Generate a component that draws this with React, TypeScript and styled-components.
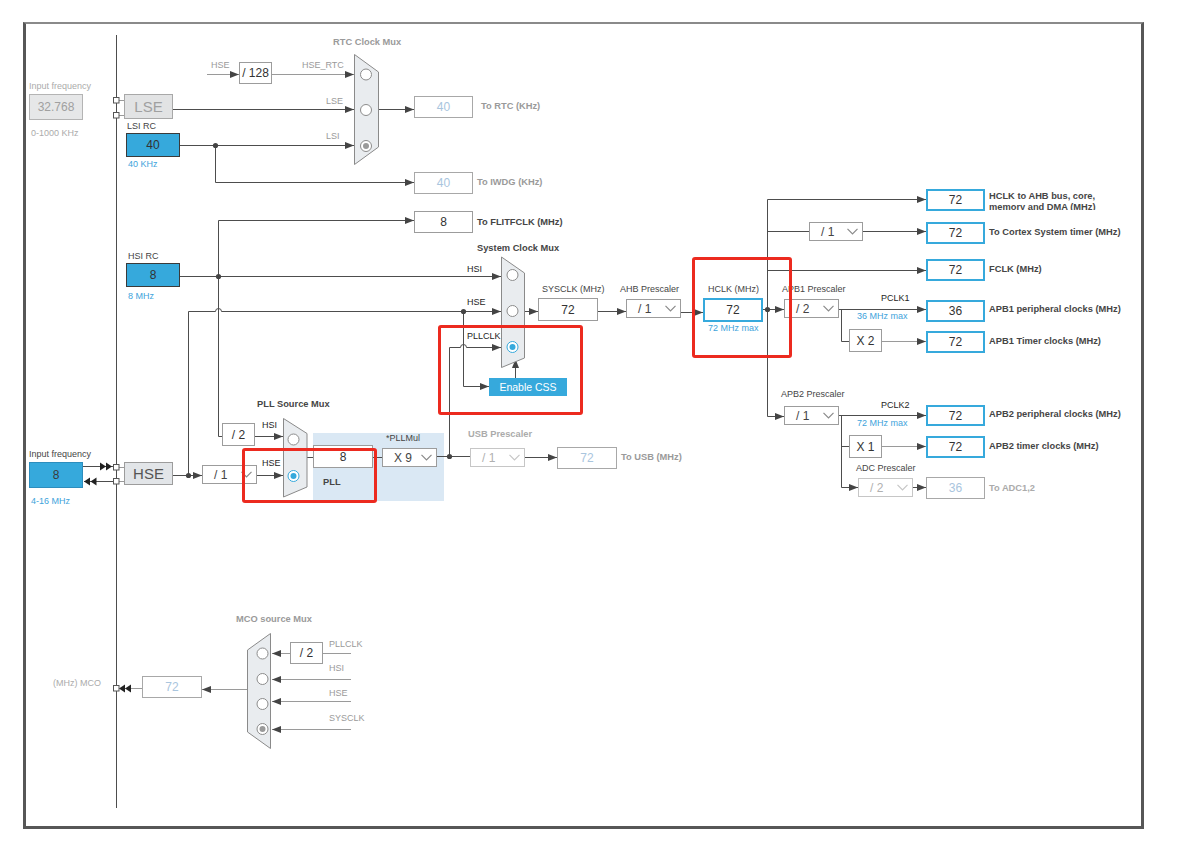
import React from "react";
import styled, { createGlobalStyle, css } from "styled-components";

const GlobalStyle = createGlobalStyle`
  html, body { margin: 0; padding: 0; background: #fff; }
  body { font-family: "Liberation Sans", Arial, sans-serif; }
`;

const DARK = "#4d4d4d";
const LIGHT = "#9a9a9a";
const BLUE = "#36a9dc";

type Pos = { $x: number; $y: number; $w?: number; $h?: number };

const Node = styled.div.attrs<Pos>((p) => ({
  style: { left: p.$x, top: p.$y, width: p.$w, height: p.$h },
}))<Pos>`
  position: absolute;
  box-sizing: border-box;
`;

const Canvas = styled.div`
  position: relative;
  width: 1191px;
  height: 847px;
  box-sizing: border-box;
  padding: 22px 0 0 23px;
  overflow: hidden;
`;

const Frame = styled.div`
  width: 1121px;
  height: 807px;
  box-sizing: border-box;
  border: 3px solid #575757;
  border-top: 2px solid #8a8a8a;
`;

type Tone = "plain" | "out" | "off" | "fill" | "src" | "srcOff" | "input" | "inputBlue";

const toneCss: Record<Tone, ReturnType<typeof css>> = {
  plain: css`background: #fff; border: 1px solid #9c9c9c; color: #333;`,
  out: css`background: #fff; border: 2px solid ${BLUE}; color: #333;`,
  off: css`background: #fff; border: 1px solid #a8a8a8; color: #a9c5de;`,
  fill: css`background: ${BLUE}; border: 1px solid #3a3a3a; color: #333;`,
  src: css`background: #e2e5e8; border: 1px solid #9c9c9c; color: #555; font-size: 15px;`,
  srcOff: css`background: #e2e3e4; border: 1px solid #a8a8a8; color: #a0a0a0; font-size: 15px;`,
  input: css`background: #e6e7e8; border: 1px solid #b4b4b4; color: #a0a0a0;`,
  inputBlue: css`background: ${BLUE}; border: 1px solid #2d8dbd; color: #3b3b3b;`,
};

const ValueBox = styled(Node)<{ $tone: Tone }>`
  display: flex;
  align-items: center;
  justify-content: center;
  font-size: 12px;
  ${(p) => toneCss[p.$tone]}
`;

const SelectBox = styled(Node)<{ $off?: boolean }>`
  display: flex;
  align-items: center;
  justify-content: space-between;
  padding: 0 4px 0 11px;
  background: #fff;
  border: 1px solid ${(p) => (p.$off ? "#c6c6c6" : "#9c9c9c")};
  color: ${(p) => (p.$off ? "#b0b0b0" : "#444")};
  font-size: 12px;
  svg { stroke: ${(p) => (p.$off ? "#c6c6c6" : "#8a8a8a")}; }
`;

type LabelTone = "dark" | "black" | "muted" | "blue" | "faint";
const labelColor: Record<LabelTone, string> = {
  dark: "#454545",
  black: "#1e1e1e",
  muted: "#9a9a9a",
  faint: "#ababab",
  blue: "#3ea3db",
};

const Label = styled(Node)<{ $tone?: LabelTone; $bold?: boolean }>`
  white-space: nowrap;
  font-size: ${(p) => (p.$bold ? "9.3px" : "9px")};
  line-height: 12px;
  font-weight: ${(p) => (p.$bold ? 700 : 400)};
  color: ${(p) => labelColor[p.$tone ?? "dark"]};
`;

const ClipLabel = styled(Label)`
  white-space: normal;
  overflow: hidden;
  line-height: 11px;
`;

const CssButton = styled(Node)`
  display: flex;
  align-items: center;
  justify-content: center;
  background: ${BLUE};
  color: #fff;
  font-size: 10.5px;
`;

const PllArea = styled(Node)`
  background: #dae8f4;
`;

const Highlight = styled(Node)`
  border: 3px solid #ec2a1f;
  border-radius: 3px;
`;

const Wires = styled.svg`
  position: absolute;
  left: 0;
  top: 0;
  pointer-events: none;
`;

const Chevron = () => (
  <svg width="11" height="7" viewBox="0 0 11 7" fill="none" strokeWidth="1.2">
    <polyline points="0.5,0.8 5.5,5.8 10.5,0.8" />
  </svg>
);

type Wire = { d: string; light?: boolean; arrow?: boolean };

const wires: Wire[] = [
  { d: "M116.5,35 V808" },
  { d: "M207,74.5 H239", light: true, arrow: true },
  { d: "M272,74.5 H354", light: true, arrow: true },
  { d: "M173,109.5 H354", arrow: true },
  { d: "M180,145.5 H354", arrow: true },
  { d: "M215.5,145.5 V182.5 H414", arrow: true },
  { d: "M378,109.5 H414", arrow: true },
  { d: "M222,436.5 H218.5 V220.5 H414", arrow: true },
  { d: "M180,276.5 H501", arrow: true },
  { d: "M188.5,475.5 V311.5 H215.5 A3,3 0 0 1 221.5,311.5 H501", arrow: true },
  { d: "M463.5,311.5 V386.5 H489", arrow: true },
  { d: "M515.5,378 V359", arrow: true },
  { d: "M449.5,456.5 V347.5 H460.5 A3,3 0 0 1 466.5,347.5 H501", arrow: true },
  { d: "M524,311.5 H538", arrow: true },
  { d: "M598,311.5 H626", arrow: true },
  { d: "M681,312.5 H703", arrow: true },
  { d: "M763,309.5 H784", arrow: true },
  { d: "M767.5,199.5 V416.5 H784", arrow: true },
  { d: "M767.5,199.5 H926", arrow: true },
  { d: "M767.5,231.5 H809" },
  { d: "M863,231.5 H926", arrow: true },
  { d: "M767.5,270.5 H926", arrow: true },
  { d: "M839,309.5 H926", arrow: true },
  { d: "M841.5,309.5 V341.5 H849" },
  { d: "M882,341.5 H926", light: true, arrow: true },
  { d: "M839,415.5 H926", arrow: true },
  { d: "M841.5,415.5 V487.5 H858", arrow: true },
  { d: "M841.5,446.5 H849" },
  { d: "M882,446.5 H926", light: true, arrow: true },
  { d: "M913,487.5 H926", arrow: true },
  { d: "M83,466.5 H113" },
  { d: "M84,481.5 H113" },
  { d: "M119,100.5 H124", light: true },
  { d: "M119,115.5 H124", light: true },
  { d: "M119,467.5 H124", light: true },
  { d: "M119,481.5 H124", light: true },
  { d: "M173,475.5 H202", arrow: true },
  { d: "M257,475.5 H283", arrow: true },
  { d: "M255,436.5 H283", arrow: true },
  { d: "M307,457.5 H313" },
  { d: "M373,457.5 H382" },
  { d: "M437,456.5 H470" },
  { d: "M525,457.5 H557", arrow: true },
  { d: "M351,653.5 H323", light: true },
  { d: "M290,653.5 H272", light: true, arrow: true },
  { d: "M351,679.5 H272", light: true, arrow: true },
  { d: "M351,701.5 H272", light: true, arrow: true },
  { d: "M351,729.5 H272", light: true, arrow: true },
  { d: "M247,689.5 H202", light: true, arrow: true },
  { d: "M142,688.5 H119", light: true },
];

const heads: string[] = [
  "M100,462.5 L106,466.5 L100,470.5 Z",
  "M106,462.5 L112,466.5 L106,470.5 Z",
  "M90,477.5 L84,481.5 L90,485.5 Z",
  "M96.5,477.5 L90.5,481.5 L96.5,485.5 Z",
  "M125,684.5 L119,688.5 L125,692.5 Z",
  "M131,684.5 L125,688.5 L131,692.5 Z",
];

const dots: [number, number][] = [
  [215.5, 145.5],
  [218.5, 276.5],
  [463.5, 311.5],
  [188.5, 475.5],
  [449.5, 456.5],
  [767.5, 309.5],
];

const ports: [number, number][] = [
  [113.5, 97.5],
  [113.5, 112.5],
  [113.5, 464.5],
  [113.5, 478.5],
  [113.5, 685.5],
];

type Mux = {
  points: string;
  cx: number;
  cys: number[];
  selected: number;
  blue?: boolean;
};

const muxes: Mux[] = [
  { points: "354.5,54.5 378.5,72 378.5,147 354.5,164.5", cx: 366, cys: [74.5, 110, 146], selected: 2 },
  { points: "501.5,257 524.5,273 524.5,358 501.5,367.5", cx: 512.5, cys: [275, 311, 347], selected: 2, blue: true },
  { points: "283.5,418.5 307,433.5 307,487 283.5,497", cx: 293.5, cys: [439.5, 476], selected: 1, blue: true },
  { points: "270.5,633.5 270.5,748.5 247.5,732 247.5,650", cx: 262.5, cys: [653.5, 679, 704, 729], selected: 3 },
];

const MuxDrawing = ({ m }: { m: Mux }) => (
  <g>
    <polygon points={m.points} fill="#e9ecef" stroke="#8a8a8a" strokeWidth="1" />
    {m.cys.map((cy, i) => {
      const on = i === m.selected;
      const ring = on && m.blue ? BLUE : "#8c8c8c";
      return (
        <g key={i}>
          <circle cx={m.cx} cy={cy} r={5.5} fill="#fff" stroke={ring} strokeWidth="1" />
          {on && <circle cx={m.cx} cy={cy} r={3} fill={m.blue ? BLUE : "#9a9a9a"} />}
        </g>
      );
    })}
  </g>
);

type Box = [number, number, number, number, string, Tone];
const boxes: Box[] = [
  [29, 94, 54, 26, "32.768", "input"],
  [124, 94, 49, 25, "LSE", "srcOff"],
  [126, 133, 54, 24, "40", "fill"],
  [239, 62, 33, 22, "/ 128", "plain"],
  [414, 96, 59, 22, "40", "off"],
  [414, 172, 59, 22, "40", "off"],
  [414, 211, 59, 22, "8", "plain"],
  [126, 263, 54, 24, "8", "fill"],
  [538, 298, 60, 23, "72", "plain"],
  [703, 298, 60, 24, "72", "out"],
  [926, 189, 59, 22, "72", "out"],
  [926, 222, 59, 22, "72", "out"],
  [926, 259, 59, 22, "72", "out"],
  [926, 300, 59, 22, "36", "out"],
  [926, 331, 59, 22, "72", "out"],
  [926, 405, 59, 21, "72", "out"],
  [926, 436, 59, 22, "72", "out"],
  [926, 477, 59, 22, "36", "off"],
  [849, 329, 33, 23, "X 2", "plain"],
  [849, 435, 33, 23, "X 1", "plain"],
  [29, 462, 54, 26, "8", "inputBlue"],
  [124, 462, 49, 23, "HSE", "src"],
  [222, 423, 33, 23, "/ 2", "plain"],
  [313, 445, 60, 23, "8", "plain"],
  [557, 447, 60, 22, "72", "off"],
  [290, 642, 33, 22, "/ 2", "plain"],
  [142, 676, 60, 22, "72", "off"],
];

type Sel = [number, number, number, string, boolean?];
const selects: Sel[] = [
  [626, 299, 55, "/ 1"],
  [784, 299, 55, "/ 2"],
  [809, 222, 54, "/ 1"],
  [784, 406, 55, "/ 1"],
  [858, 478, 55, "/ 2", true],
  [202, 465, 55, "/ 1"],
  [382, 448, 55, "X 9"],
  [470, 448, 55, "/ 1", true],
];

type Lbl = [number, number, string, LabelTone, boolean?];
const labels: Lbl[] = [
  [29, 86, "Input frequency", "faint"],
  [31, 133, "0-1000 KHz", "faint"],
  [333, 42, "RTC Clock Mux", "muted", true],
  [211, 65, "HSE", "muted"],
  [302, 65, "HSE_RTC", "muted"],
  [326, 101, "LSE", "muted"],
  [127, 126, "LSI RC", "dark"],
  [326, 136, "LSI", "muted"],
  [128, 164, "40 KHz", "blue"],
  [481, 106, "To RTC (KHz)", "muted", true],
  [477, 182, "To IWDG (KHz)", "muted", true],
  [477, 222, "To FLITFCLK (MHz)", "dark", true],
  [128, 256, "HSI RC", "dark"],
  [128, 296, "8 MHz", "blue"],
  [477, 248, "System Clock Mux", "dark", true],
  [467, 269, "HSI", "black"],
  [467, 302, "HSE", "black"],
  [467, 336, "PLLCLK", "black"],
  [542, 289, "SYSCLK (MHz)", "dark"],
  [620, 289, "AHB Prescaler", "dark"],
  [708, 289, "HCLK (MHz)", "dark"],
  [708, 328, "72 MHz max", "blue"],
  [782, 289, "APB1 Prescaler", "dark"],
  [989, 232, "To Cortex System timer (MHz)", "dark", true],
  [989, 269, "FCLK (MHz)", "dark", true],
  [881, 298, "PCLK1", "black"],
  [857, 316, "36 MHz max", "blue"],
  [989, 309, "APB1 peripheral clocks (MHz)", "dark", true],
  [989, 341, "APB1 Timer clocks (MHz)", "dark", true],
  [781, 394, "APB2 Prescaler", "dark"],
  [881, 405, "PCLK2", "black"],
  [857, 423, "72 MHz max", "blue"],
  [989, 414, "APB2 peripheral clocks (MHz)", "dark", true],
  [989, 446, "APB2 timer clocks (MHz)", "dark", true],
  [856, 468, "ADC Prescaler", "dark"],
  [989, 488, "To ADC1,2", "faint", true],
  [29, 454, "Input frequency", "dark"],
  [31, 501, "4-16 MHz", "blue"],
  [257, 404, "PLL Source Mux", "dark", true],
  [262, 425, "HSI", "black"],
  [262, 463, "HSE", "black"],
  [386, 438, "*PLLMul", "dark"],
  [323, 482, "PLL", "dark", true],
  [468, 434, "USB Prescaler", "faint", true],
  [621, 457, "To USB (MHz)", "muted", true],
  [236, 619, "MCO source Mux", "muted", true],
  [329, 644, "PLLCLK", "muted"],
  [329, 668, "HSI", "muted"],
  [329, 693, "HSE", "muted"],
  [329, 718, "SYSCLK", "muted"],
  [53, 683, "(MHz) MCO", "faint"],
];

export default function App() {
  return (
    <>
      <GlobalStyle />
      <Canvas>
        <Frame />
        <PllArea $x={313} $y={433} $w={131} $h={68} />
        <Wires width={1191} height={847} viewBox="0 0 1191 847">
          <defs>
            <marker id="ah" markerUnits="userSpaceOnUse" markerWidth="9" markerHeight="8" refX="9" refY="4" orient="auto">
              <path d="M0,0.5 L9,4 L0,7.5 Z" fill="#444" />
            </marker>
          </defs>
          {wires.map((w, i) => (
            <path
              key={i}
              d={w.d}
              fill="none"
              stroke={w.light ? LIGHT : DARK}
              strokeWidth="1"
              markerEnd={w.arrow ? "url(#ah)" : undefined}
            />
          ))}
          {heads.map((d, i) => (
            <path key={i} d={d} fill="#222" />
          ))}
          {dots.map(([x, y], i) => (
            <circle key={i} cx={x} cy={y} r={2.6} fill="#444" />
          ))}
          {ports.map(([x, y], i) => (
            <rect key={i} x={x} y={y} width={5.5} height={5.5} fill="#fff" stroke="#555" strokeWidth="1" />
          ))}
          {muxes.map((m, i) => (
            <MuxDrawing key={i} m={m} />
          ))}
        </Wires>

        {boxes.map(([x, y, w, h, text, tone], i) => (
          <ValueBox key={i} $x={x} $y={y} $w={w} $h={h} $tone={tone}>
            {text}
          </ValueBox>
        ))}

        {selects.map(([x, y, w, text, off], i) => (
          <SelectBox key={i} $x={x} $y={y} $w={w} $h={19} $off={off}>
            <span>{text}</span>
            <Chevron />
          </SelectBox>
        ))}

        {labels.map(([x, cy, text, tone, bold], i) => (
          <Label key={i} $x={x} $y={cy - 6} $tone={tone} $bold={bold}>
            {text}
          </Label>
        ))}

        <ClipLabel $x={989} $y={191} $w={130} $h={19} $tone="dark" $bold>
          HCLK to AHB bus, core,
          <br />
          memory and DMA (MHz)
        </ClipLabel>

        <CssButton $x={489} $y={378} $w={78} $h={18}>
          Enable CSS
        </CssButton>

        <Highlight $x={438} $y={325} $w={145} $h={90} />
        <Highlight $x={692} $y={257} $w={100} $h={101} />
        <Highlight $x={242} $y={448} $w={135} $h={55} />
      </Canvas>
    </>
  );
}
